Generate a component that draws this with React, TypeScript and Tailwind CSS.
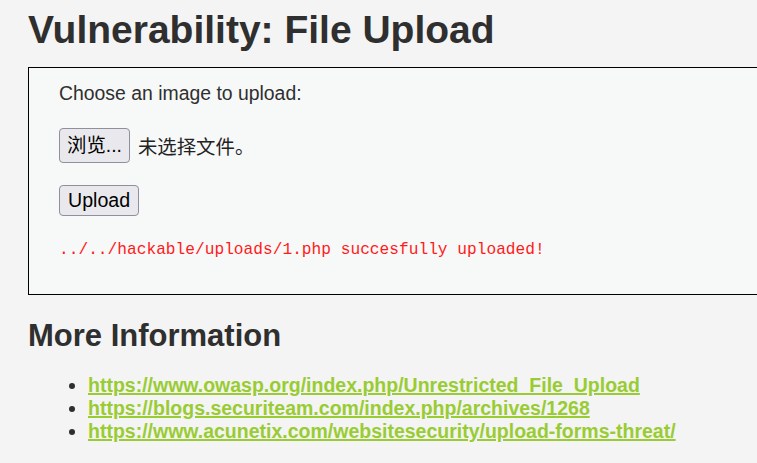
import React from 'react';

const links = [
    'https://www.owasp.org/index.php/Unrestricted_File_Upload',
    'https://blogs.securiteam.com/index.php/archives/1268',
    'https://www.acunetix.com/websitesecurity/upload-forms-threat/',
];

const App: React.FC = () => {
    return (
        <div className="min-h-screen w-full overflow-hidden bg-[#f4f4f4] text-[#2f2f2f] font-['Liberation_Sans',Arial,'Noto_Sans_CJK_SC',sans-serif]">
            <h1 className="pl-[28px] pt-[8px] text-[39px] font-bold leading-[44px] whitespace-nowrap">
                Vulnerability: File Upload
            </h1>
            <div className="ml-[28px] mt-[15px] w-[780px] border border-black bg-[#f7f8f8] pl-[30px] pt-[14px] pb-[34px]">
                <p className="text-[19.4px] leading-[22px]">Choose an image to upload:</p>
                <div className="mt-[24px] flex items-center">
                    <button className="h-[35px] rounded-[4px] border border-[#8f8f9d] bg-[#e9e9ed] px-[7px] text-[19.4px] leading-none text-black">
                        浏览...
                    </button>
                    <span className="ml-[8px] text-[19.4px] font-['Noto_Sans_CJK_SC',sans-serif] text-[#222]">未选择文件。</span>
                </div>
                <button className="mt-[22px] block h-[31px] rounded-[4px] border border-[#8f8f9d] bg-[#e9e9ed] px-[8px] text-[19.6px] leading-none text-black">
                    Upload
                </button>
                <pre className="mt-[24px] text-[16.2px] leading-[20px] text-[#ff1a1a] font-['Liberation_Mono',monospace]">
                    ../../hackable/uploads/1.php succesfully uploaded!
                </pre>
            </div>
            <h2 className="mt-[23px] pl-[28px] text-[31px] font-bold leading-[36px]">More Information</h2>
            <ul className="mt-[20px] ml-[28px] list-disc pl-[60px] text-[19.5px] leading-[23px]">
                {links.map((l) => (
                    <li key={l}>
                        <a href="#" className="font-bold text-[#99cc33] underline decoration-2">{l}</a>
                    </li>
                ))}
            </ul>
        </div>
    );
};

export default App;
